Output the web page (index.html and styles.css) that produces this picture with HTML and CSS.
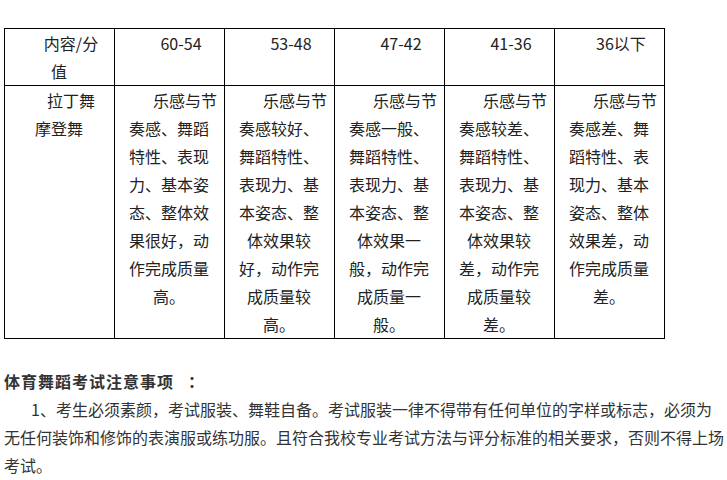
FILE: index.html
```html
<!DOCTYPE html>
<html lang="zh-CN">
<head>
<meta charset="utf-8">
<title>体育舞蹈考试</title>
<link rel="stylesheet" href="styles.css">
</head>
<body>
<div class="page">
  <table class="score">
    <tr class="head">
      <td>内容/分值</td>
      <td>60-54</td>
      <td>53-48</td>
      <td>47-42</td>
      <td>41-36</td>
      <td>36以下</td>
    </tr>
    <tr class="body">
      <td>拉丁舞摩登舞</td>
      <td><span class="nw">乐感与节</span>奏感、舞蹈特性、表现力、基本姿态、整体效果很好，动作完成质量高。</td>
      <td><span class="nw">乐感与节</span>奏感较好、舞蹈特性、表现力、基本姿态、整体效果较好，动作完成质量较高。</td>
      <td><span class="nw">乐感与节</span>奏感一般、舞蹈特性、表现力、基本姿态、整体效果一般，动作完成质量一般。</td>
      <td><span class="nw">乐感与节</span>奏感较差、舞蹈特性、表现力、基本姿态、整体效果较差，动作完成质量较差。</td>
      <td><span class="nw">乐感与节</span>奏感差、舞蹈特性、表现力、基本姿态、整体效果差，动作完成质量差。</td>
    </tr>
  </table>
  <h2 class="title"><span class="title-text">体育舞蹈考试注意事项</span><span class="colon">：</span></h2>
  <p class="note">1、考生必须素颜，考试服装、舞鞋自备。考试服装一律不得带有任何单位的字样或标志，必须为无任何装饰和修饰的表演服或练功服。且符合我校专业考试方法与评分标准的相关要求，否则不得上场考试。</p>
</div>
</body>
</html>
```
FILE: styles.css
```css
html, body {
  margin: 0;
  padding: 0;
  background: #fff;
}
body {
  font-family: "Noto Sans CJK SC", "Noto Sans", sans-serif;
  font-size: 16px;
  line-height: 28px;
  color: #333;
  text-spacing-trim: space-all;
}
.page {
  padding: 28px 0 0 4px;
}
.score {
  width: 660px;
  border-collapse: collapse;
  table-layout: fixed;
  margin: 0 0 28px 0;
  color: #222;
}
.score td {
  width: 80px;
  padding: 0 15px 0 14px;
  border: 1px solid #000;
  vertical-align: top;
  text-align: center;
  text-indent: 24px;
  line-height: 28px;
  overflow: visible;
}
.nw {
  white-space: nowrap;
}
.title {
  margin: 0;
  font-size: 16px;
  line-height: 28px;
  font-weight: bold;
  color: #333;
}
.title-text {
  letter-spacing: 1px;
}
.colon {
  margin-left: 14px;
}
.note {
  margin: 0 3px 0 0;
  text-indent: 27px;
  color: #333;
}
```
